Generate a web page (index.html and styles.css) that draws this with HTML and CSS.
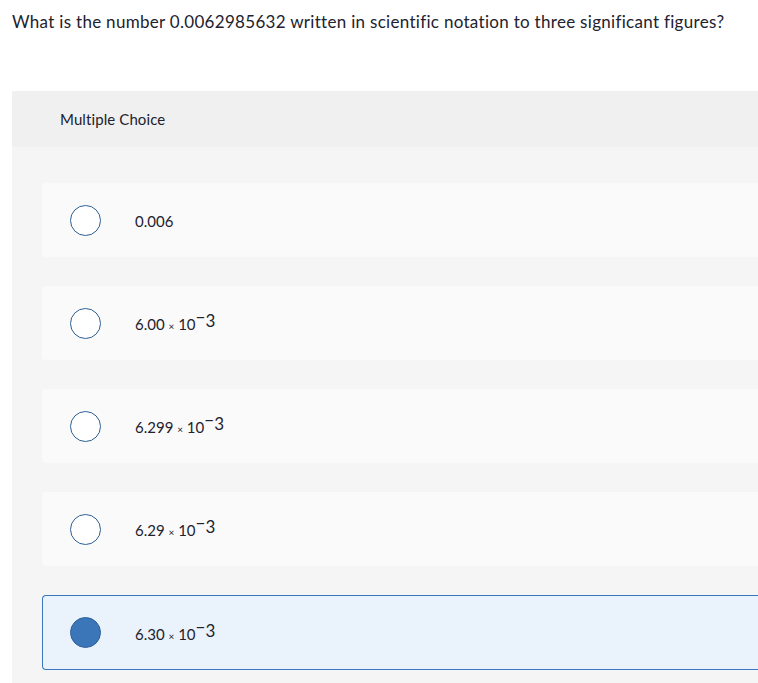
FILE: index.html
```html
<!DOCTYPE html>
<html>
<head>
<meta charset="utf-8">
<link rel="stylesheet" href="styles.css">
</head>
<body>
<p class="question">What is the number 0.0062985632 written in scientific notation to three significant figures?</p>
<div class="panel">
  <div class="panel-head">Multiple Choice</div>
  <div class="options">
    <div class="option"><span class="radio"></span><span class="label">0.006</span></div>
    <div class="option"><span class="radio"></span><span class="label">6.00 <span class="times">×</span> 10<sup><span class="minus">−</span>3</sup></span></div>
    <div class="option"><span class="radio"></span><span class="label">6.299 <span class="times">×</span> 10<sup><span class="minus">−</span>3</sup></span></div>
    <div class="option"><span class="radio"></span><span class="label">6.29 <span class="times">×</span> 10<sup><span class="minus">−</span>3</sup></span></div>
    <div class="option selected"><span class="radio"></span><span class="label">6.30 <span class="times">×</span> 10<sup><span class="minus">−</span>3</sup></span></div>
  </div>
</div>
</body>
</html>
```

FILE: styles.css
```css
html, body {
  margin: 0;
  padding: 0;
  background: #ffffff;
  overflow: hidden;
  font-family: Lato, "Liberation Sans", sans-serif;
  color: #22222e;
}
.question {
  margin: 0;
  padding: 11px 0 0 12px;
  font-size: 17px;
  letter-spacing: 0.3px;
  line-height: 22px;
  height: 91px;
  box-sizing: border-box;
  white-space: nowrap;
  overflow: hidden;
}
.panel {
  margin-left: 12px;
  width: 746px;
  background: #f5f5f5;
  height: 592px;
  overflow: hidden;
}
.panel-head {
  background: #f0f0f0;
  height: 56px;
  padding-left: 48px;
  display: flex;
  align-items: center;
  font-size: 15px;
  letter-spacing: 0.1px;
}
.options {
  padding: 36px 0 0 30px;
  display: flex;
  flex-direction: column;
  gap: 29px;
}
.option {
  height: 74px;
  background: #fafafa;
  border-radius: 4px 0 0 4px;
  display: flex;
  align-items: center;
  padding-left: 28px;
  box-sizing: border-box;
}
.option.selected {
  height: 75px;
  background: #eaf2fb;
  border: 1px solid #3a78bd;
  border-right: none;
  padding-left: 27px;
}
.radio {
  width: 29px;
  height: 29px;
  border: 1px solid #2f5f92;
  border-radius: 50%;
  background: #ffffff;
  flex: none;
}
.selected .radio {
  background: #3a76b8;
  border-color: #2f6199;
}
.label {
  margin-left: 34px;
  font-size: 15px;
  padding-top: 2px;
}
.times {
  font-size: 10px;
}
sup {
  font-size: 17px;
  vertical-align: 3px;
  line-height: 0;
}
.minus {
  display: inline-block;
  transform: translateY(-4px);
}
```
